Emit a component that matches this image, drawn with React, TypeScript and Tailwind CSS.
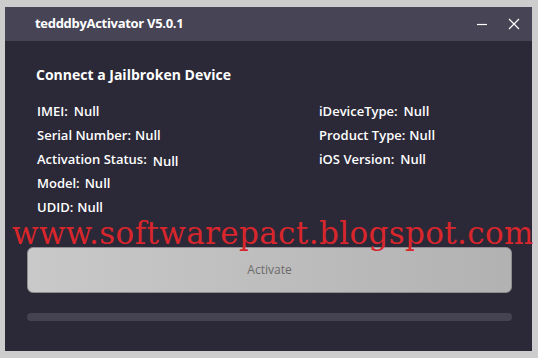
import React from "react"

const left = [
  { label: "IMEI:", value: "Null", gap: "ml-[6px]" },
  { label: "Serial Number:", value: "Null", gap: "ml-[4px]" },
  { label: "Activation Status:", value: "Null", gap: "ml-[6px] translate-y-[2px]" },
  { label: "Model:", value: "Null", gap: "ml-[5px]" },
  { label: "UDID:", value: "Null", gap: "ml-[4px]" },
]

const right = [
  { label: "iDeviceType:", value: "Null", gap: "ml-[6px]" },
  { label: "Product Type:", value: "Null", gap: "ml-[4px]" },
  { label: "iOS Version:", value: "Null", gap: "ml-[6px]" },
]

function InfoRow({ label, value, gap }: { label: string; value: string; gap: string }) {
  return (
    <div className="flex h-[24px] items-center whitespace-nowrap">
      <span>{label}</span>
      <span className={gap}>{value}</span>
    </div>
  )
}

export default function App() {
  return (
    <div className="relative h-[358px] w-[538px] overflow-hidden bg-[#cdcdcd] pl-[5px] pt-[7px] font-['Open_Sans','Noto_Sans',sans-serif]">
      <div className="flex h-[344px] w-[527px] flex-col bg-[#2b2937]">
        {/* title bar */}
        <div className="flex h-[34px] items-center bg-[#474455] pl-[30px] pr-[12px] text-white">
          <span className="text-[13px] font-bold tracking-[-0.3px]">tedddbyActivator V5.0.1</span>
          <div className="ml-auto flex items-center gap-[20px]">
            <svg width="12" height="12" viewBox="0 0 12 12">
              <path d="M1 6.5h10" stroke="#fff" strokeWidth="1.2" />
            </svg>
            <svg width="12" height="12" viewBox="0 0 12 12">
              <path d="M1 1l10 10M11 1L1 11" stroke="#fff" strokeWidth="1.2" />
            </svg>
          </div>
        </div>

        {/* body */}
        <div className="flex flex-1 flex-col px-[22px] pt-[24px]">
          <div className="pl-[9px] text-[14px] font-bold leading-[19px] text-white">Connect a Jailbroken Device</div>
          <div className="mt-[15px] flex pl-[10px] text-[13px] font-semibold leading-[18px] text-white">
            <div className="w-[282px]">
              {left.map((r) => (
                <InfoRow key={r.label} {...r} />
              ))}
            </div>
            <div>
              {right.map((r) => (
                <InfoRow key={r.label} {...r} />
              ))}
            </div>
          </div>

          <button className="mt-[28px] flex h-[46px] w-[485px] items-center justify-center rounded-[6px] border border-[#8e8e92] bg-gradient-to-r from-[#c9c9c9] to-[#b2b2b2] text-[12px] text-[#6b6b6b]">
            Activate
          </button>

          <div className="mt-[20px] h-[8px] w-[485px] rounded-full bg-[#454352]" />
        </div>
      </div>

      {/* watermark */}
      <div className="absolute left-[12px] top-[220px] whitespace-nowrap font-['DejaVu_Serif',serif] text-[31px] leading-[26px] tracking-[0.38px] text-[#d8262c]">
        www.softwarepact.blogspot.com
      </div>
    </div>
  )
}
